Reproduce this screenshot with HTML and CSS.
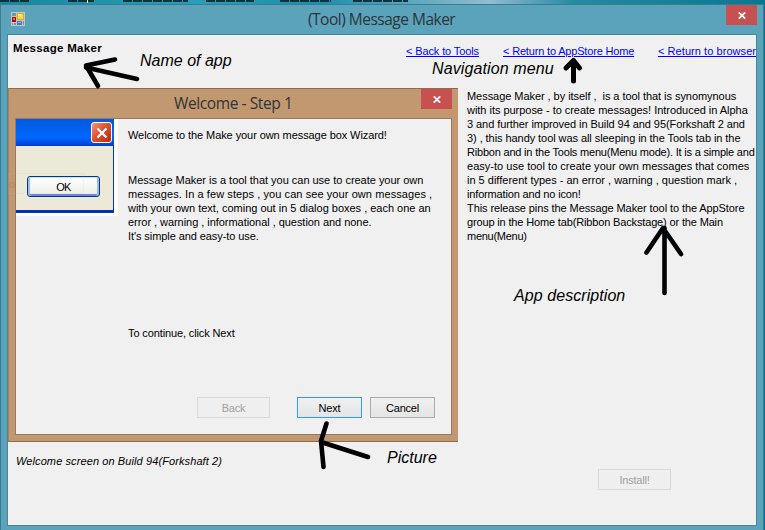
FILE: index.html
```html
<!DOCTYPE html>
<html lang="en">
<head>
<meta charset="utf-8">
<title>(Tool) Message Maker</title>
<link rel="stylesheet" href="styles.css">
</head>
<body>
<div class="desktop">
  <svg class="wallpaper" width="765" height="4" viewBox="0 0 765 4" aria-hidden="true">
    <g class="labels">
      <path d="M0 0H30M68 0H94M123 0H188M206 0H254M280 0H331M353 0H408"/>
    </g>
    <path d="M87.500 0V3" stroke="#f4e7b0"/>
  </svg>
  <main class="window">
    <header class="titlebar">
      <svg class="app-icon" width="14" height="14" viewBox="0 0 14 14" aria-hidden="true">
        <path fill="#c9c5c0" d="M0 0H14V14H0z"/>
        <path fill="#5a9fb8" d="M1 1H5V4H1zM1 11H2V13H1zM3 11H5V13H3zM12 9H13V13H12z"/>
        <path fill="#e5a70b" d="M6 1H13V8H6z"/><path fill="#ffd84f" d="M7 2H12V7H7z"/><path fill="#ffeeaa" d="M7 2H10V4H7z"/>
        <path fill="#a8120b" d="M1 5H5V10H1z"/><path fill="#e96c5b" d="M2 6H4V8H2z"/>
        <path fill="#437bdc" d="M6 9H11V13H6z"/><path fill="#8eb6f5" d="M7 10H10V11H7z"/>
      </svg>
      <h1 class="title">(Tool) Message Maker</h1>
      <button class="close" aria-label="Close"><svg width="8" height="7" viewBox="0 0 8 7"><path d="M.8 .3L7.200 6.700M7.200 .3L.8 6.700"/></svg></button>
    </header>
    <div class="client">
      <div class="topline">
        <h2 class="app-name">Message Maker</h2>
        <nav class="nav"><a>&lt; Back to Tools</a><a class="home">&lt; Return to AppStore Home</a><a class="browser">&lt; Return to browser</a></nav>
      </div>
      <div class="columns">
        <section class="left">
          <div class="dialog">
            <header class="dialog-bar">
              <h3 class="title dialog-title">Welcome - Step 1</h3>
              <button class="close" aria-label="Close"><svg width="8" height="7" viewBox="0 0 8 7"><path d="M.8 .3L7.200 6.700M7.200 .3L.8 6.700"/></svg></button>
            </header>
            <div class="dialog-body">
              <div class="xp">
                <div class="xp-bar"><div class="xp-close"><svg width="12" height="12" viewBox="0 0 12 12"><path d="M1.500 1.500L10.500 10.500M10.500 1.500L1.500 10.500" stroke="#fff" stroke-width="2.300"/></svg></div></div>
                <div class="xp-body"><div class="xp-ok">OK</div></div>
              </div>
              <div class="wizard">
                <p class="intro">Welcome to the Make your own message box Wizard!</p>
                <p class="about"><span class="w1">Message Maker is a tool that you can use to create your own</span><br><span class="w2">messages. In a few steps , you can see your own messages ,</span><br><span class="w3">with your own text, coming out in 5 dialog boxes , each one an</span><br><span class="w4">error , warning , informational , question and none.</span><br><span class="w5">It's simple and easy-to use.</span></p>
                <p class="continue">To continue, click Next</p>
                <div class="buttons"><button class="btn wide off">Back</button><button class="btn next">Next</button><button class="btn">Cancel</button></div>
              </div>
            </div>
          </div>
          <p class="caption">Welcome screen on Build 94(Forkshaft 2)</p>
        </section>
        <section class="right">
          <p class="description"><span class="d1">Message Maker , by itself ,&nbsp; is a tool that is synomynous</span><br><span class="d2">with its purpose - to create messages! Introduced in Alpha</span><br><span class="d3">3 and further improved in Build 94 and 95(Forkshaft 2 and</span><br><span class="d4">3) , this handy tool was all sleeping in the Tools tab in the</span><br><span class="d5">Ribbon and in the Tools menu(Menu mode). It is a simple and</span><br><span class="d6">easy-to use tool to create your own messages that comes</span><br><span class="d7">in 5 different types - an error , warning , question mark ,</span><br><span class="d8">information and no icon!</span><br><span class="d9">This release pins the Message Maker tool to the AppStore</span><br><span class="d10">group in the Home tab(Ribbon Backstage) or the Main</span><br><span class="d11">menu(Menu)</span></p>
          <button class="btn wide off install">Install!</button>
        </section>
      </div>
    </div>
  </main>
  <div class="ghost">o</div>
  <div class="note note-name">Name of app</div>
  <div class="note note-nav">Navigation menu</div>
  <div class="note note-desc">App description</div>
  <div class="note note-pic">Picture</div>
  <svg class="arrows" width="765" height="530" viewBox="0 0 765 530" aria-hidden="true">
    <g fill="none" stroke="#000" stroke-linecap="round" stroke-linejoin="round">
      <path stroke-width="4.600" d="M137 79L86 67.500M115 59.500L86 65.500L98 86"/>
      <path stroke-width="5" d="M573.500 81V61M566 68L573.500 60.500L579.500 68"/>
      <path stroke-width="4.600" d="M664.500 293V228M646.500 252.500L663 228L681 254"/>
      <path stroke-width="4.600" d="M368 457L321 442M326.500 423.500L321 441L323.500 467"/>
    </g>
  </svg>
</div>
</body>
</html>
```
FILE: styles.css
```css
* { box-sizing: border-box; }
body { margin: 0; font: 11px/14px "Liberation Sans", Arial, sans-serif; color: #000; }
h1, h2, h3, p { margin: 0; font-size: 11px; font-weight: normal; }
button { font: inherit; padding: 0; }
.desktop { position: relative; width: 765px; height: 530px; overflow: hidden; background: #0a7590; display: flex; flex-direction: column; }
.wallpaper { display: block; flex: none; background: linear-gradient(90deg, #1586a0, #28a0b8 25%, #1c8fa9 42%, #92bdcf 64%, #2689a3 75%, #087892); }
.labels { stroke: #06222b; stroke-width: 4; stroke-dasharray: 9 1; filter: blur(.7px); opacity: .85; }
.window { flex: none; width: 764px; height: 530px; padding: 0 7px; background: #5ba3bb; border: 1px solid #3d7c90; }
.titlebar, .dialog-bar { display: flex; align-items: flex-start; height: 29px; }
.app-icon { margin: 7px 0 0 3px; flex: none; }
.title { font: 15.500px/20px "Open Sans", "Noto Sans", sans-serif; color: #2e3437; white-space: nowrap; }
.titlebar .title { margin: 4px 0 0 283px; letter-spacing: -.5px; }
.close { width: 31px; height: 20px; margin-left: auto; margin-right: -1px; border: 0; background: #c75050; display: flex; align-items: center; justify-content: center; }
.close path { stroke: #fff; stroke-width: 1.700; fill: none; }
.client { margin: 0 -1px; height: 492px; background: #f0f0f0; border: 1px solid #44869b; }
.topline { display: flex; height: 53px; }
.app-name { font-weight: bold; font-size: 11.500px; margin: 6px 0 0 5px; width: 100px; white-space: nowrap; letter-spacing: .3px; }
.nav { display: flex; margin: 9px 0 0 293px; white-space: nowrap; overflow: hidden; flex: 1; height: 16px; }
.nav a { color: #00f; text-decoration: underline; width: 97px; flex: none; letter-spacing: -.12px; }
.nav a.home { width: 155px; letter-spacing: -.17px; }
.nav a.browser { letter-spacing: .06px; }
.columns { display: flex; }
.left { width: 450px; flex: none; }
.dialog { height: 354px; background: #c29870; border: 1px solid #8d6c50; border-right: 0; border-left-color: #aa815f; padding: 0 6px; }
.dialog-title { margin: 4px 0 0 159px; letter-spacing: -.4px; }
.dialog-bar .close { margin-right: 0; }
.dialog-body { height: 317px; background: #f0f0f0; border: 1px solid #9c7859; display: flex; }
.xp { width: 102px; height: 97px; flex: none; border: solid #fff; border-width: 0 4px 3px 0; }
.xp-bar { height: 27px; padding: 3px 2px 0; background: linear-gradient(#0059df, #0064f4 50%, #0068ff 70%, #003cce); display: flex; justify-content: flex-end; }
.xp-close { width: 21px; height: 21px; border: 1px solid #fff; border-radius: 3px; background: linear-gradient(135deg, #ef9a7c, #dd532e 45%, #b92a0b); display: flex; align-items: center; justify-content: center; }
.xp-body { height: 67px; background: #ece9d8; border: solid #0030bd; border-width: 0 1px 3px 0; padding: 30px 0 0 11px; }
.xp-ok { width: 73px; height: 21px; border: 1px solid #003c74; border-radius: 3px; box-shadow: inset 0 1px #cddff5, inset 2px 0 #9db9ed, inset -2px 0 #9db9ed, inset 0 -2px #6982ee; background: linear-gradient(#fff, #edede5); text-align: center; line-height: 20px; letter-spacing: -.8px; }
.wizard { margin-left: 10px; flex: 1; white-space: nowrap; }
.intro { margin-top: 9px; letter-spacing: -.08px; }
.about { margin-top: 31px; }
.w1 { letter-spacing: -.02px; }
.w2 { letter-spacing: .08px; }
.w3 { letter-spacing: -.01px; }
.w4 { letter-spacing: -.045px; }
.w5 { letter-spacing: -.08px; }
.continue { margin-top: 83px; letter-spacing: -.12px; }
.buttons { display: flex; margin: 57px 0 0 69px; }
.btn { width: 65px; height: 21px; margin-right: 8px; color: #000; border: 1px solid #acacac; background: linear-gradient(#f0f0f0, #e5e5e5); font: 11px/18px "Liberation Sans", sans-serif; letter-spacing: -.2px; text-align: center; flex: none; }
.btn.wide { width: 73px; margin-right: 27px; }
.btn.off { color: #a0a0a0; border-color: #d9d9d9; background: #efefef; }
.btn.next { border-color: #3399ff; }
.caption { font-style: italic; margin: 12px 0 0 8px; white-space: nowrap; letter-spacing: .1px; }
.right { margin-left: 9px; flex: 1; white-space: nowrap; }
.description { padding-top: 1px; }
.d1 { letter-spacing: -.05px; }
.d2 { letter-spacing: -.03px; }
.d3 { letter-spacing: -.07px; }
.d4 { letter-spacing: -.065px; }
.d5 { letter-spacing: -.2px; }
.d6 { letter-spacing: .02px; }
.d8 { letter-spacing: -.16px; }
.d9 { letter-spacing: -.09px; }
.d10 { letter-spacing: -.15px; }
.d11 { letter-spacing: -.27px; }
.install { display: block; margin: 226px 0 0 131px; }
.note { position: absolute; font: italic 16px/20px "Liberation Sans", Arial, sans-serif; white-space: nowrap; }
.note-name { left: 140px; top: 51px; }
.note-nav { left: 432px; top: 59px; letter-spacing: .12px; }
.note-desc { left: 514px; top: 286px; letter-spacing: .07px; }
.note-pic { left: 387px; top: 448px; }
.arrows { position: absolute; left: 0; top: 0; }
.ghost { position: absolute; left: 8px; top: 173px; width: 76px; height: 21px; line-height: 20px; color: #b87d50; border: 1px solid rgba(200,190,170,.2); opacity: .65; }
```
